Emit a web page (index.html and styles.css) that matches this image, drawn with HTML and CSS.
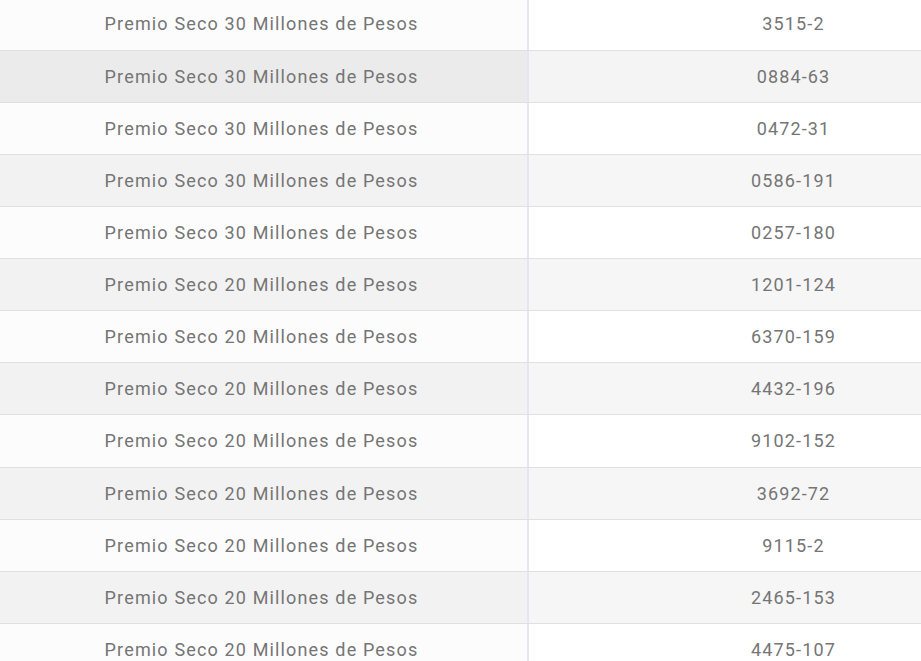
FILE: index.html
```html
<!DOCTYPE html>
<html lang="es">
<head>
<meta charset="utf-8">
<title>Premios</title>
<link rel="stylesheet" href="styles.css">
</head>
<body>
<div class="wrap">
<div class="prizes">
<div class="row"><div class="name">Premio Seco 30 Millones de Pesos</div><div class="num">3515-2</div></div>
<div class="row hover"><div class="name">Premio Seco 30 Millones de Pesos</div><div class="num">0884-63</div></div>
<div class="row"><div class="name">Premio Seco 30 Millones de Pesos</div><div class="num">0472-31</div></div>
<div class="row"><div class="name">Premio Seco 30 Millones de Pesos</div><div class="num">0586-191</div></div>
<div class="row"><div class="name">Premio Seco 30 Millones de Pesos</div><div class="num">0257-180</div></div>
<div class="row"><div class="name">Premio Seco 20 Millones de Pesos</div><div class="num">1201-124</div></div>
<div class="row"><div class="name">Premio Seco 20 Millones de Pesos</div><div class="num">6370-159</div></div>
<div class="row"><div class="name">Premio Seco 20 Millones de Pesos</div><div class="num">4432-196</div></div>
<div class="row"><div class="name">Premio Seco 20 Millones de Pesos</div><div class="num">9102-152</div></div>
<div class="row"><div class="name">Premio Seco 20 Millones de Pesos</div><div class="num">3692-72</div></div>
<div class="row"><div class="name">Premio Seco 20 Millones de Pesos</div><div class="num">9115-2</div></div>
<div class="row"><div class="name">Premio Seco 20 Millones de Pesos</div><div class="num">2465-153</div></div>
<div class="row"><div class="name">Premio Seco 20 Millones de Pesos</div><div class="num">4475-107</div></div>
</div>
</div>
</body>
</html>
```
FILE: styles.css
```css
html, body {
  margin: 0;
  padding: 0;
  background: #ffffff;
  overflow: hidden;
}
.wrap {
  width: 921px;
  height: 661px;
  overflow: hidden;
}
.prizes {
  width: 1058px;
  margin-top: -1.6px;
  font-family: Roboto, "Noto Sans", sans-serif;
  font-size: 18px;
  letter-spacing: 1.15px;
  color: #757575;
}
.row {
  display: grid;
  grid-template-columns: 529px 1fr;
  height: 52.14px;
  box-sizing: border-box;
  border-bottom: 1px solid #e0e0e0;
}
.name,
.num {
  display: flex;
  align-items: center;
  justify-content: center;
}
.name {
  background: #fcfcfc;
  border-right: 2px solid #e4e8ec;
  padding-right: 4px;
}
.num {
  background: #ffffff;
}
.row:nth-child(even) .name {
  background: #f2f2f2;
}
.row:nth-child(even) .num {
  background: #f6f6f6;
}
.row.hover .name {
  background: #ebebeb;
}
.row.hover .num {
  background: #f4f4f4;
}
```
